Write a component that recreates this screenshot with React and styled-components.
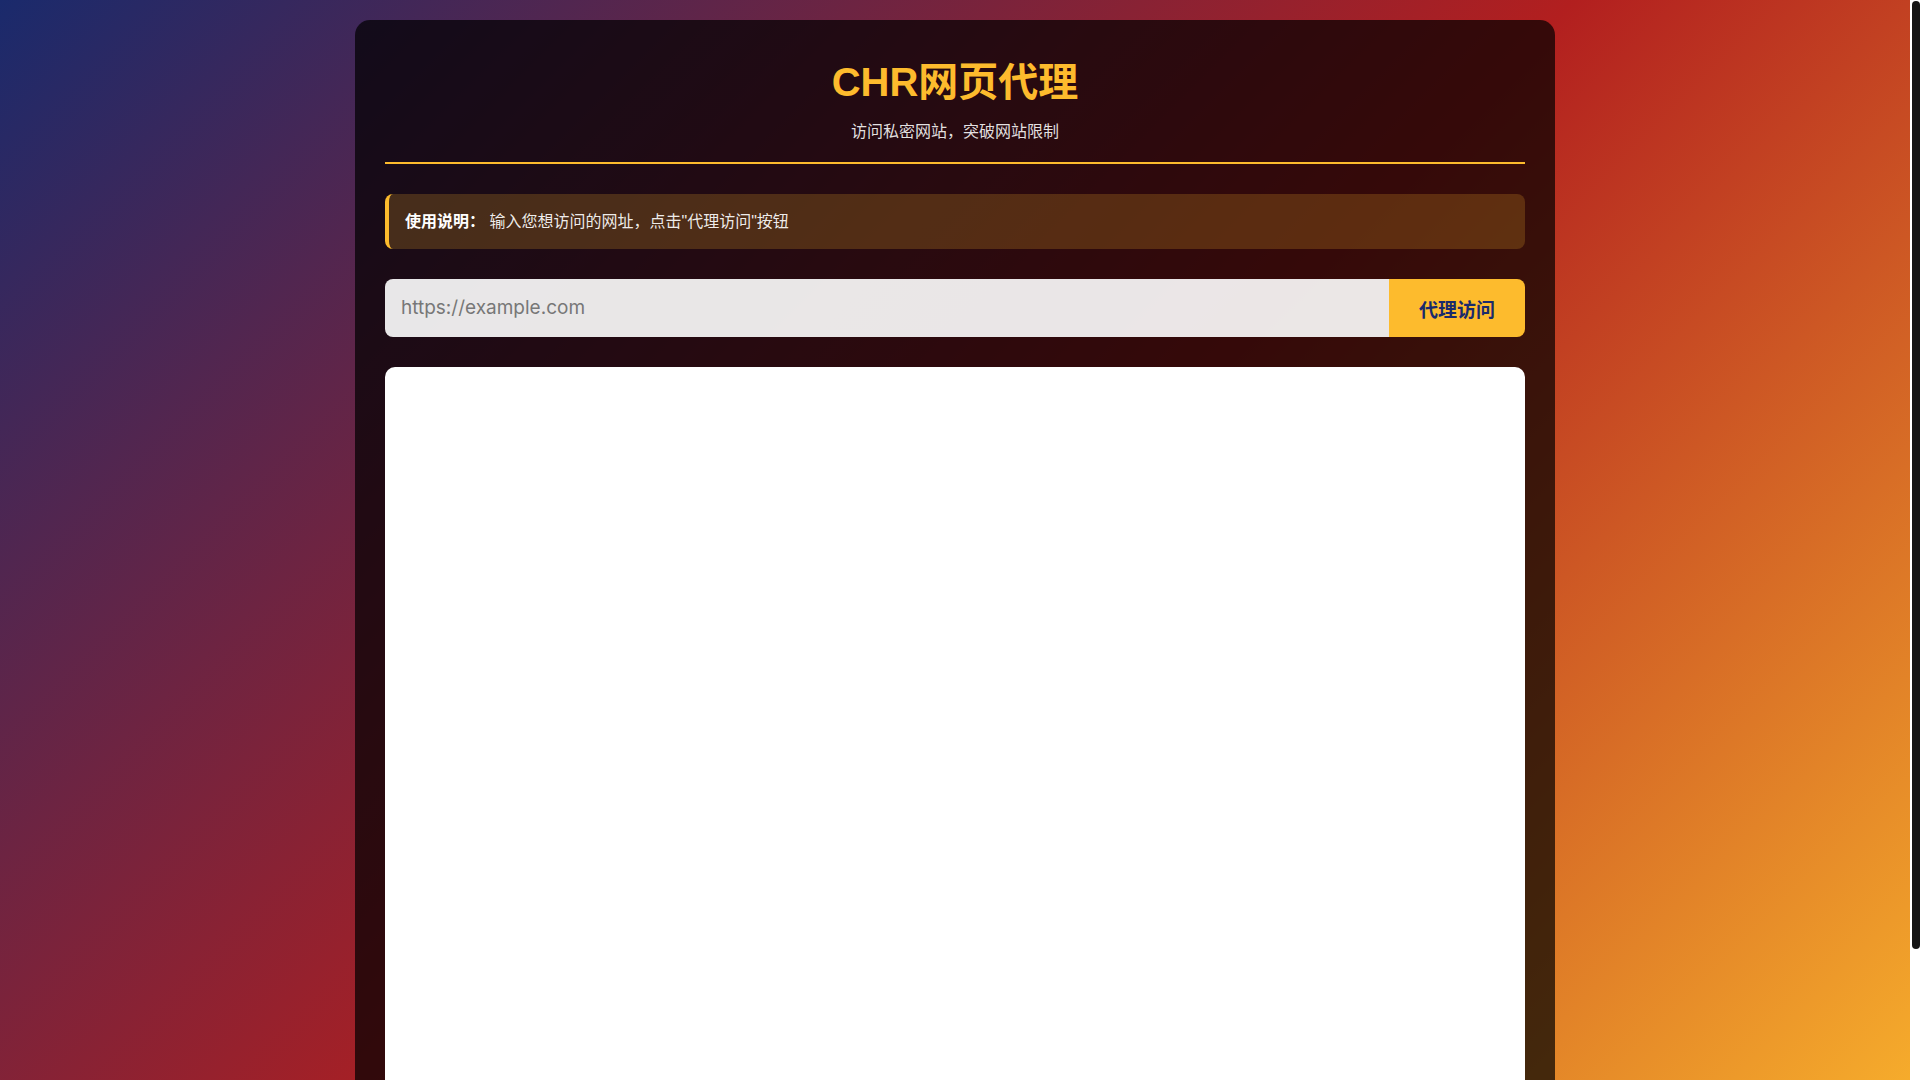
import React, { useState } from "react";
import styled, { createGlobalStyle } from "styled-components";

const GlobalStyle = createGlobalStyle`
  * {
    box-sizing: border-box;
  }
  body {
    margin: 0;
    padding: 20px 30px 20px 20px;
    min-height: 100vh;
    font-family: "Liberation Sans", "Noto Sans CJK SC", Arial, sans-serif;
    background: linear-gradient(135deg, #1a2a6c, #b21f1f, #fdbb2d);
    color: #fff;
  }
`;

/* page scrollbar as it shows in the capture */
const ScrollTrack = styled.div`
  position: fixed;
  top: 0;
  right: 0;
  width: 10px;
  height: 100vh;
  padding: 1px 0 0 2px;
  background: #fff;
`;

const ScrollThumb = styled.div`
  width: 8px;
  height: 948px;
  background: #151515;
  border-radius: 4px;
`;

const Container = styled.div`
  width: 1200px;
  margin: 0 auto;
  padding: 30px;
  background: rgba(0, 0, 0, 0.7);
  border-radius: 15px;
`;

const Header = styled.header`
  text-align: center;
  padding-bottom: 19px;
  border-bottom: 2px solid #fdbb2d;
  margin-bottom: 30px;
`;

const Title = styled.h1`
  margin: 9px 0 16px;
  font-size: 40px;
  line-height: 46px;
  font-weight: 700;
  color: #fdbb2d;
`;

const Subtitle = styled.p`
  margin: 0;
  font-size: 16px;
  line-height: 22px;
  color: rgba(255, 255, 255, 0.88);
`;

const Notice = styled.div`
  padding: 16px 16px 15px;
  font-size: 16px;
  line-height: 24px;
  background: rgba(253, 187, 45, 0.2);
  border-left: 4px solid #fdbb2d;
  border-radius: 8px;
  color: rgba(255, 255, 255, 0.92);

  strong {
    font-weight: 700;
    color: #fff;
  }
`;

const SearchRow = styled.form`
  display: flex;
  margin-top: 30px;
`;

const UrlInput = styled.input`
  flex: 1;
  padding: 16px;
  font-family: Inter, "Noto Sans CJK SC", sans-serif;
  font-size: 19px;
  line-height: 26px;
  border: none;
  outline: none;
  border-radius: 8px 0 0 8px;
  background: rgba(255, 255, 255, 0.9);
  color: #222;

  &::placeholder {
    color: #777;
  }
`;

const GoButton = styled.button`
  padding: 0 30px;
  font-family: "Liberation Sans", "Noto Sans CJK SC", sans-serif;
  font-size: 19px;
  font-weight: 700;
  color: #1a2a6c;
  background: #fdbb2d;
  border: none;
  border-radius: 0 8px 8px 0;
  cursor: pointer;
`;

const Viewer = styled.div`
  margin-top: 30px;
  height: 812px;
  background: #fff;
  border-radius: 10px;
`;

export default function App() {
  const [url, setUrl] = useState("");

  const handleSubmit = (e) => {
    e.preventDefault();
  };

  return (
    <>
      <GlobalStyle />
      <Container>
        <Header>
          <Title>CHR网页代理</Title>
          <Subtitle>访问私密网站，突破网站限制</Subtitle>
        </Header>

        <Notice>
          <strong>使用说明：</strong> 输入您想访问的网址，点击"代理访问"按钮
        </Notice>

        <SearchRow onSubmit={handleSubmit}>
          <UrlInput
            placeholder="https://example.com"
            value={url}
            onChange={(e) => setUrl(e.target.value)}
          />
          <GoButton type="submit">代理访问</GoButton>
        </SearchRow>

        <Viewer />
      </Container>
      <ScrollTrack>
        <ScrollThumb />
      </ScrollTrack>
    </>
  );
}
